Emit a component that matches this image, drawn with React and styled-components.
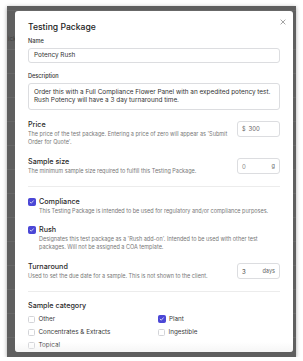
import React from "react";
import styled, { createGlobalStyle } from "styled-components";

const Global = createGlobalStyle`
  html, body { margin: 0; padding: 0; background: #ffffff; }
  body { font-family: Inter, "Noto Sans", sans-serif; -webkit-font-smoothing: antialiased; }
  * { box-sizing: border-box; }
`;

const Frame = styled.div`
  position: relative;
  margin: 6px 0 0 7px;
  width: 289px;
  height: 351px;
  background: #5f5f5f;
  box-shadow: 0 1px 4px rgba(0, 0, 0, 0.35);
  overflow: hidden;
  padding: 5px 0 0 8px;
`;

const Backdrop = styled.div`
  position: absolute;
  inset: 0;
  background-image:
    repeating-linear-gradient(to bottom, transparent 0, transparent 23px, rgba(255,255,255,0.06) 23px, rgba(255,255,255,0.06) 24px);
  background-position: 0 20px;
`;

const BackdropText = styled.span`
  position: absolute;
  left: 1px;
  top: 29px;
  font-size: 6px;
  color: #3f3f3f;
`;

const Modal = styled.div`
  position: relative;
  width: 278px;
  height: 341px;
  background: #ffffff;
  border-radius: 3px;
  padding: 9px 13px 0 13px;
  overflow: hidden;
`;

const Fade = styled.div`
  position: absolute;
  left: 0;
  right: 0;
  bottom: 0;
  height: 10px;
  pointer-events: none;
  background: linear-gradient(to bottom, rgba(255,255,255,0), rgba(238,238,238,0.55));
`;

const Close = styled.button`
  position: absolute;
  top: 6.5px;
  right: 5.5px;
  width: 9px;
  height: 9px;
  padding: 0;
  border: 0;
  background: none;
  display: flex;
  align-items: center;
  justify-content: center;
`;

const Title = styled.h2`
  margin: 0;
  font-size: 8.6px;
  line-height: 14px;
  font-weight: 500;
  color: #222;
`;

const Label = styled.label`
  display: block;
  font-size: 5.6px;
  line-height: 8px;
  font-weight: 500;
  color: #333;
  margin-top: ${(p) => p.$mt || 0}px;
`;

const TextBox = styled.div`
  margin-top: 3px;
  border: 1px solid #dcdde0;
  border-radius: 3px;
  padding: ${(p) => (p.$multi ? "4px 5px" : "0 5px")};
  height: ${(p) => (p.$multi ? 27 : 15)}px;
  display: flex;
  align-items: ${(p) => (p.$multi ? "flex-start" : "center")};
  font-size: 6.4px;
  line-height: 8.2px;
  color: #333;
`;

const Row = styled.div`
  display: flex;
  align-items: ${(p) => p.$align || "flex-start"};
  justify-content: space-between;
  margin-top: ${(p) => p.$mt || 0}px;
`;

const Info = styled.div`
  display: flex;
  flex-direction: column;
  min-width: 0;
`;

const FieldTitle = styled.div`
  font-size: 7.2px;
  line-height: 10px;
  font-weight: 500;
  color: #2a2a2a;
  margin-top: ${(p) => p.$mt || 0}px;
`;

const Help = styled.div`
  font-size: 5.5px;
  line-height: 8px;
  color: #777;
  max-width: ${(p) => p.$max || 250}px;
`;

const SmallInput = styled.div`
  width: 43px;
  height: 15.5px;
  flex: none;
  margin-top: ${(p) => p.$mt || 0}px;
  border: 1px solid #dcdde0;
  border-radius: 3px;
  display: flex;
  align-items: center;
  padding: 0 4px;
  gap: 3px;
  font-size: 6px;
  color: #666;
`;

const Value = styled.span`
  flex: 1;
  color: ${(p) => p.$color || "#666"};
`;

const Suffix = styled.span`
  color: #666;
  font-size: 5.6px;
`;

const Divider = styled.hr`
  border: 0;
  border-top: 1px solid #ececec;
  margin: ${(p) => p.$m || "0"};
`;

const Check = styled.span`
  width: ${(p) => (p.$on ? 7.5 : 7)}px;
  height: ${(p) => (p.$on ? 7.5 : 7)}px;
  flex: none;
  border-radius: 1.5px;
  border: 1px solid ${(p) => (p.$on ? "#4b47d6" : "#d3d4d8")};
  background: ${(p) => (p.$on ? "#4b47d6" : "#fff")};
  display: flex;
  align-items: center;
  justify-content: center;
`;

const CheckRow = styled.div`
  display: flex;
  align-items: center;
  gap: 3.5px;
`;

const CheckBlock = styled.div`
  margin-top: ${(p) => p.$mt || 0}px;
`;

const Indented = styled.div`
  padding-left: 11px;
`;

const Grid = styled.div`
  display: grid;
  grid-template-columns: 130px 1fr;
  row-gap: 5px;
  margin-top: 4px;
`;

const Option = styled.div`
  display: flex;
  align-items: center;
  gap: 3.5px;
  font-size: 6.3px;
  line-height: 8px;
  color: #3a3a3a;
`;

const Tick = () => (
  <svg width="6" height="6" viewBox="0 0 12 12">
    <path d="M2.5 6.3 L5 8.6 L9.6 3.4" fill="none" stroke="#fff" strokeWidth="1.6" strokeLinecap="round" strokeLinejoin="round" />
  </svg>
);

const Box = ({ on }) => <Check $on={on}>{on && <Tick />}</Check>;

export default function App() {
  return (
    <>
      <Global />
      <Frame>
        <Backdrop>
          <BackdropText>ick</BackdropText>
        </Backdrop>
        <Modal>
          <Close aria-label="Close">
            <svg width="6" height="6" viewBox="0 0 10 10">
              <path d="M1.5 1.5 L8.5 8.5 M8.5 1.5 L1.5 8.5" stroke="#8a8a8a" strokeWidth="1.3" strokeLinecap="round" />
            </svg>
          </Close>
          <Title>Testing Package</Title>
          <Label $mt={3}>Name</Label>
          <TextBox>Potency Rush</TextBox>
          <Label $mt={9}>Description</Label>
          <TextBox $multi>
            Order this with a Full Compliance Flower Panel with an expedited potency test. Rush Potency will have a 3 day turnaround time.
          </TextBox>

          <Row $mt={10}>
            <Info>
              <FieldTitle>Price</FieldTitle>
              <Help $max={205}>
                The price of the test package. Entering a price of zero will appear as 'Submit Order for Quote'.
              </Help>
            </Info>
            <SmallInput $mt={1}>
              <Suffix>$</Suffix>
              <Value>300</Value>
            </SmallInput>
          </Row>

          <Row $mt={11} $align="center">
            <Info>
              <FieldTitle>Sample size</FieldTitle>
              <Help>The minimum sample size required to fulfill this Testing Package.</Help>
            </Info>
            <SmallInput>
              <Value $color="#888">0</Value>
              <Suffix>g</Suffix>
            </SmallInput>
          </Row>

          <Divider $m="11px 0 0 0" />

          <CheckBlock $mt={10}>
            <CheckRow>
              <Box on />
              <FieldTitle>Compliance</FieldTitle>
            </CheckRow>
            <Indented>
              <Help>This Testing Package is intended to be used for regulatory and/or compliance purposes.</Help>
            </Indented>
          </CheckBlock>

          <CheckBlock $mt={10}>
            <CheckRow>
              <Box on />
              <FieldTitle>Rush</FieldTitle>
            </CheckRow>
            <Indented>
              <Help $max={235}>
                Designates this test package as a 'Rush add-on'. Intended to be used with other test packages. Will not be assigned a COA template.
              </Help>
            </Indented>
          </CheckBlock>

          <Row $mt={11} $align="center">
            <Info>
              <FieldTitle>Turnaround</FieldTitle>
              <Help>Used to set the due date for a sample. This is not shown to the client.</Help>
            </Info>
            <SmallInput>
              <Value $color="#444">3</Value>
              <Suffix>days</Suffix>
            </SmallInput>
          </Row>

          <Divider $m="11px 0 0 0" />

          <FieldTitle $mt={9}>Sample category</FieldTitle>
          <Grid>
            <Option><Box /> Other</Option>
            <Option><Box on /> Plant</Option>
            <Option><Box /> Concentrates &amp; Extracts</Option>
            <Option><Box /> Ingestible</Option>
            <Option><Box /> Topical</Option>
          </Grid>
          <Fade />
        </Modal>
      </Frame>
    </>
  );
}
